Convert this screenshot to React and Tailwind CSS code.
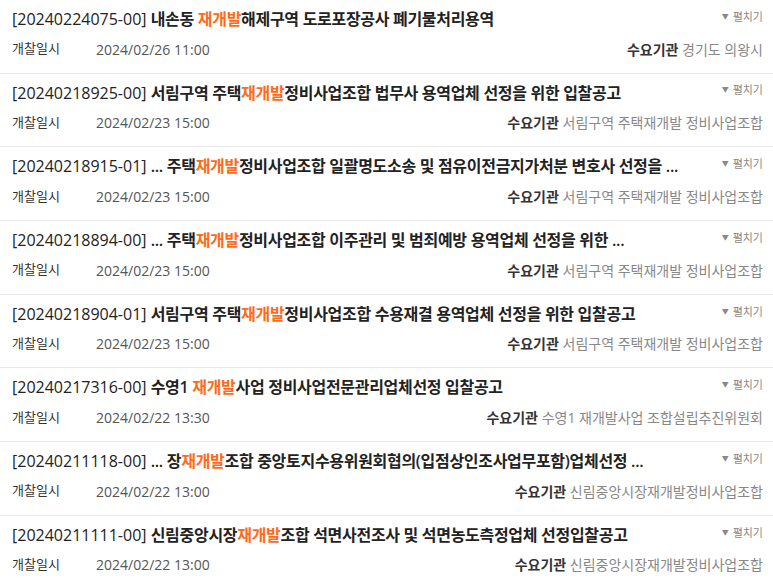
import { useState } from "react";

const BIDS = [
  { no: "20240224075-00", pre: "내손동 ", post: "해제구역 도로포장공사 폐기물처리용역", date: "2024/02/26 11:00", org: "경기도 의왕시" },
  { no: "20240218925-00", pre: "서림구역 주택", post: "정비사업조합 법무사 용역업체 선정을 위한 입찰공고", date: "2024/02/23 15:00", org: "서림구역 주택재개발 정비사업조합" },
  { no: "20240218915-01", pre: "... 주택", post: "정비사업조합 일괄명도소송 및 점유이전금지가처분 변호사 선정을 ...", date: "2024/02/23 15:00", org: "서림구역 주택재개발 정비사업조합" },
  { no: "20240218894-00", pre: "... 주택", post: "정비사업조합 이주관리 및 범죄예방 용역업체 선정을 위한 ...", date: "2024/02/23 15:00", org: "서림구역 주택재개발 정비사업조합" },
  { no: "20240218904-01", pre: "서림구역 주택", post: "정비사업조합 수용재결 용역업체 선정을 위한 입찰공고", date: "2024/02/23 15:00", org: "서림구역 주택재개발 정비사업조합" },
  { no: "20240217316-00", pre: "수영1 ", post: "사업 정비사업전문관리업체선정 입찰공고", date: "2024/02/22 13:30", org: "수영1 재개발사업 조합설립추진위원회" },
  { no: "20240211118-00", pre: "... 장", post: "조합 중앙토지수용위원회협의(입점상인조사업무포함)업체선정 ...", date: "2024/02/22 13:00", org: "신림중앙시장재개발정비사업조합" },
  { no: "20240211111-00", pre: "신림중앙시장", post: "조합 석면사전조사 및 석면농도측정업체 선정입찰공고", date: "2024/02/22 13:00", org: "신림중앙시장재개발정비사업조합" },
];

function BidRow({ bid }) {
  const [open, setOpen] = useState(false);
  return (
    <div className="h-[73.7px] border-b border-[#e9e9e9] pl-3 pr-[10px] pt-[7px]">
      <div className="flex items-center justify-between h-6">
        <p className="text-[16px] text-[#222] whitespace-nowrap">
          <span>[{bid.no}] </span>
          <span className="font-semibold tracking-[-0.3px]">
            {bid.pre}
            <span className="text-[#ff6a1a]">재개발</span>
            {bid.post}
          </span>
        </p>
        <button
          onClick={() => setOpen(!open)}
          className="flex items-center gap-[4px] text-[11px] text-[#888] mt-[-4px]"
        >
          <span className="text-[7px]">▼</span>
          펼치기
        </button>
      </div>
      <div className="flex items-center justify-between mt-[6px] h-6">
        <div className="flex items-center text-[13px]">
          <span className="text-[#333] w-[84px]">개찰일시</span>
          <span className="text-[#555] text-[14px]">{bid.date}</span>
        </div>
        <div className="text-[14px] whitespace-nowrap">
          <span className="font-bold text-[#333]">수요기관</span>{" "}
          <span className="text-[#888]">{bid.org}</span>
        </div>
      </div>
    </div>
  );
}

export default function App() {
  return (
    <div
      className="w-[773px] h-[585px] overflow-hidden bg-white"
      style={{ fontFamily: '"Open Sans", "Noto Sans CJK KR", sans-serif' }}
    >
      {BIDS.map((b) => (
        <BidRow key={b.no} bid={b} />
      ))}
    </div>
  );
}
